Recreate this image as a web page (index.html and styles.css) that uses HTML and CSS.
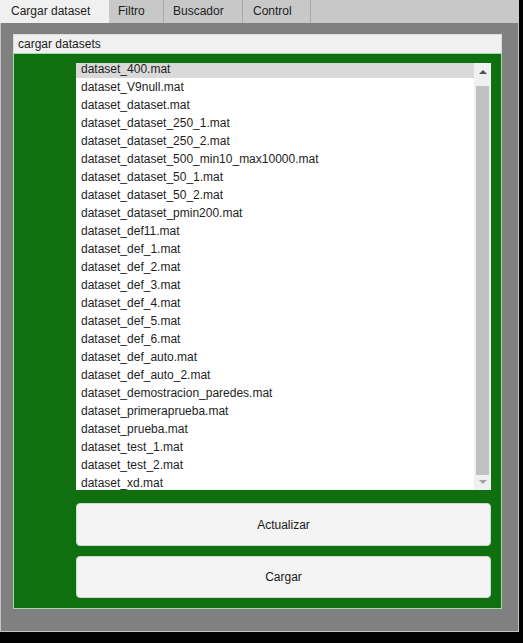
FILE: index.html
```html
<!DOCTYPE html>
<html>
<head>
<meta charset="utf-8">
<link rel="stylesheet" href="styles.css">
</head>
<body>
<div class="app">
  <div class="tabs">
    <div class="tab active t1">Cargar dataset</div>
    <div class="tab t2">Filtro</div>
    <div class="tab t3">Buscador</div>
    <div class="tab t4">Control</div>
  </div>
  <div class="panel">
    <div class="panel-title">cargar datasets</div>
    <div class="panel-body">
      <div class="listbox">
        <div class="items">
          <div class="item selected">dataset_400.mat</div>
          <div class="item">dataset_V9null.mat</div>
          <div class="item">dataset_dataset.mat</div>
          <div class="item">dataset_dataset_250_1.mat</div>
          <div class="item">dataset_dataset_250_2.mat</div>
          <div class="item">dataset_dataset_500_min10_max10000.mat</div>
          <div class="item">dataset_dataset_50_1.mat</div>
          <div class="item">dataset_dataset_50_2.mat</div>
          <div class="item">dataset_dataset_pmin200.mat</div>
          <div class="item">dataset_def11.mat</div>
          <div class="item">dataset_def_1.mat</div>
          <div class="item">dataset_def_2.mat</div>
          <div class="item">dataset_def_3.mat</div>
          <div class="item">dataset_def_4.mat</div>
          <div class="item">dataset_def_5.mat</div>
          <div class="item">dataset_def_6.mat</div>
          <div class="item">dataset_def_auto.mat</div>
          <div class="item">dataset_def_auto_2.mat</div>
          <div class="item">dataset_demostracion_paredes.mat</div>
          <div class="item">dataset_primeraprueba.mat</div>
          <div class="item">dataset_prueba.mat</div>
          <div class="item">dataset_test_1.mat</div>
          <div class="item">dataset_test_2.mat</div>
          <div class="item">dataset_xd.mat</div>
        </div>
        <div class="scrollbar">
          <div class="arrow up"></div>
          <div class="thumb"></div>
          <div class="arrow down"></div>
        </div>
      </div>
      <button class="btn b1">Actualizar</button>
      <button class="btn b2">Cargar</button>
    </div>
  </div>
</div>
</body>
</html>
```
FILE: styles.css
```css
html, body {
  margin: 0;
  padding: 0;
  background: #000;
}
body {
  width: 523px;
  height: 643px;
  overflow: hidden;
  font-family: "Liberation Sans", Arial, sans-serif;
  font-size: 12px;
  color: #1a1a1a;
}
.app {
  width: 519px;
  height: 632px;
  box-sizing: border-box;
  background: #808080;
  border: 1px solid #c4c4c4;
  border-top: none;
  display: flex;
  flex-direction: column;
}
.tabs {
  height: 23px;
  background: #c8c8c8;
  display: flex;
  margin: 0 -1px;
}
.tab {
  box-sizing: border-box;
  height: 23px;
  line-height: 22px;
  padding-left: 10px;
  font-size: 12px;
  color: #222;
  border-right: 1px solid #a9a9a9;
}
.tab.active {
  background: #f0f0f0;
  border-right: none;
}
.t1 { width: 109px; padding-left: 11px; }
.t2 { width: 55px; padding-left: 9px; }
.t3 { width: 79px; padding-left: 9px; }
.t4 { width: 68px; padding-left: 10px; }
.panel {
  margin: 11px 0 0 12px;
  width: 489px;
  display: flex;
  flex-direction: column;
}
.panel-title {
  box-sizing: border-box;
  height: 19px;
  line-height: 18px;
  padding-left: 4px;
  background: #f0f0f0;
  border: 1px solid #dcdcdc;
  border-bottom: none;
  color: #1a1a1a;
}
.panel-body {
  box-sizing: border-box;
  height: 556px;
  background: #107010;
  border: 1px solid #a6d8a6;
  padding: 9px 10px 0 62px;
  display: flex;
  flex-direction: column;
}
.listbox {
  height: 427px;
  background: #fff;
  display: flex;
  overflow: hidden;
}
.items {
  flex: 1;
  margin-top: -3px;
}
.item {
  height: 18px;
  line-height: 18px;
  padding-left: 5px;
  white-space: nowrap;
  color: #1e1e1e;
}
.item.selected {
  background: #d9d9d9;
}
.scrollbar {
  width: 17px;
  background: #f0f0f0;
  display: flex;
  flex-direction: column;
  align-items: center;
}
.arrow {
  width: 0;
  height: 0;
  border-left: 4px solid transparent;
  border-right: 4px solid transparent;
}
.arrow.up {
  margin-top: 7px;
  border-bottom: 4px solid #505050;
}
.thumb {
  width: 13px;
  flex: 1;
  margin: 12px 0 5px;
  background: #c1c1c1;
}
.arrow.down {
  margin-bottom: 6px;
  border-top: 4px solid #a3a3a3;
}
.btn {
  font-family: "Liberation Sans", Arial, sans-serif;
  font-size: 12px;
  color: #1a1a1a;
  background: #f4f4f4;
  border: 1px solid #cfd8cf;
  border-radius: 4px;
  padding: 0;
}
.b1 {
  margin-top: 13px;
  height: 43px;
}
.b2 {
  margin-top: 10px;
  height: 42px;
}
```
